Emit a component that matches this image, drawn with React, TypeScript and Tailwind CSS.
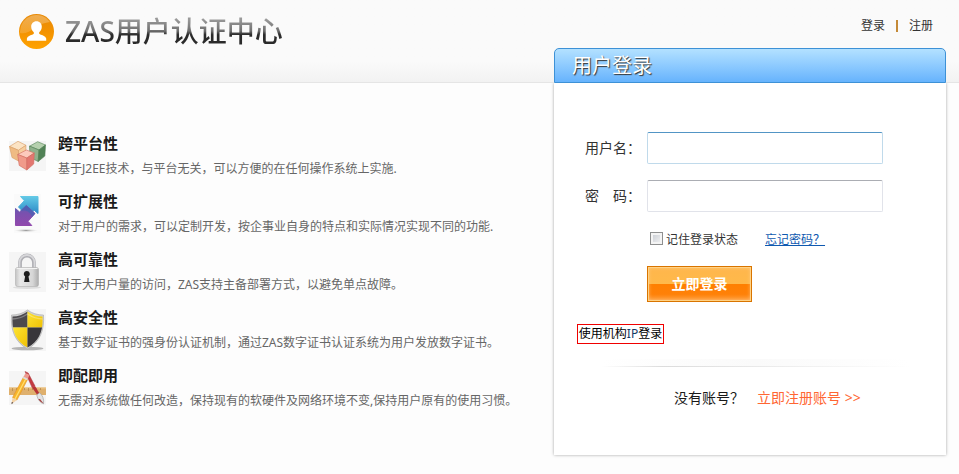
import type { ReactNode } from "react";

type Feature = {
  title: string;
  text: string;
  icon: ReactNode;
};

function LogoIcon() {
  return (
    <svg width="35" height="35" viewBox="0 0 35 35" aria-hidden="true">
      <defs>
        <linearGradient id="logo-base" x1="0" y1="0" x2="0" y2="1">
          <stop offset="0" stopColor="#e88a08" />
          <stop offset="0.5" stopColor="#f39200" />
          <stop offset="1" stopColor="#ffa300" />
        </linearGradient>
        <linearGradient id="logo-gloss" x1="0" y1="0" x2="0" y2="1">
          <stop offset="0" stopColor="#fff" stopOpacity="0.3" />
          <stop offset="1" stopColor="#fff" stopOpacity="0.15" />
        </linearGradient>
      </defs>
      <circle cx="17.5" cy="17.5" r="17.5" fill="url(#logo-base)" />
      <path d="M1 17.5A16.5 16.5 0 0 1 31 8C24 9 20 11 15 14.500C10 18 6 20 1 19Z" fill="url(#logo-gloss)" />
      <path
        d="M17.500 7.200c3.200 0 5.300 2.400 5.300 5.500 0 2.500-1.200 4.300-2.600 5.500v1.500c1.500 1.300 6.600 2 7 4.900v2.100H7.900v-2.100c.4-2.900 5.500-3.600 6.900-4.900v-1.500c-1.400-1.200-2.600-3-2.600-5.500 0-3.100 2.100-5.500 5.300-5.500z"
        fill="#fff"
      />
    </svg>
  );
}

function CubesIcon() {
  return (
    <svg width="37" height="44" viewBox="0 0 37 44" className="shrink-0" aria-hidden="true">
      <rect y="8" width="37" height="30" fill="#f5f5f5" />
      <g strokeWidth="0.6" strokeLinejoin="round">
        <g stroke="#d79a63">
          <path d="M.5 13.500L9 8.300l8 4-7.500 5z" fill="#fbe3c4" />
          <path d="M.5 13.500l9 3.800V28L3 24.500z" fill="#efbb83" />
          <path d="M9.500 17.300l7.500-5-.5 10.500-7 5.200z" fill="#f6cfa0" />
        </g>
        <g stroke="#4d7d50">
          <path d="M20.500 13.200l8.200-4.500 7.800 3.300-6.500 5z" fill="#b5d0ae" />
          <path d="M20.500 13.200L30 17l-.8 11.500-8.200-4z" fill="#8fb18c" />
          <path d="M30 17l6.500-5-.7 11-6.600 5.500z" fill="#518256" />
        </g>
        <g stroke="#d06a5e">
          <path d="M8.700 21.500l8.600-4.500 8 3-7.500 5z" fill="#fccabd" />
          <path d="M8.700 21.500l9.100 3.500v12l-7.600-4.600z" fill="#f09a8a" />
          <path d="M17.800 25l7.500-5-.6 11-6.900 6z" fill="#e27770" />
        </g>
      </g>
    </svg>
  );
}

function ArrowsIcon() {
  return (
    <svg width="37" height="44" viewBox="0 0 37 44" className="shrink-0" aria-hidden="true">
      <defs>
        <linearGradient id="arrow-blue" x1="0" y1="0" x2="0" y2="1">
          <stop offset="0" stopColor="#63c9e6" />
          <stop offset="1" stopColor="#2380c2" />
        </linearGradient>
        <linearGradient id="arrow-purple" x1="0" y1="0" x2="0" y2="1">
          <stop offset="0" stopColor="#5c60b4" />
          <stop offset="0.4" stopColor="#7a50ae" />
          <stop offset="1" stopColor="#9149ad" />
        </linearGradient>
        <radialGradient id="arrow-shadow">
          <stop offset="0" stopColor="#999" />
          <stop offset="1" stopColor="#ddd" stopOpacity="0" />
        </radialGradient>
      </defs>
      <rect x="5" y="3" width="27" height="39" fill="#fafafa" />
      <ellipse cx="17" cy="39.500" rx="12" ry="1.700" fill="url(#arrow-shadow)" />
      <g strokeLinejoin="round">
        <path
          d="M11.500 5.500H29V22.500l-3.800-3.300-6.200 6.300-9.500-9.500 5.800-6.300z"
          fill="url(#arrow-blue)"
          stroke="url(#arrow-blue)"
        />
        <path
          d="M6.500 17.500l4 3.500 6.800-6.500 8.700 8-7 7.800 3.800 4.200H6.500z"
          fill="url(#arrow-purple)"
          stroke="url(#arrow-purple)"
        />
      </g>
      <path d="M11.500 20l5.800-5.500 8.700 8-3 3.500c-2-6-7-7.500-11.500-6z" fill="#4463b2" fillOpacity="0.7" />
    </svg>
  );
}

function LockIcon() {
  return (
    <svg width="37" height="44" viewBox="0 0 37 44" className="shrink-0" aria-hidden="true">
      <defs>
        <linearGradient id="lock-body" x1="0" y1="0" x2="1" y2="0">
          <stop offset="0" stopColor="#c4c4c4" />
          <stop offset="0.2" stopColor="#e8e8e8" />
          <stop offset="0.75" stopColor="#d6d6d6" />
          <stop offset="1" stopColor="#adadad" />
        </linearGradient>
      </defs>
      <rect y="3" width="37" height="40" fill="#f5f5f5" />
      <ellipse cx="18" cy="38.500" rx="14" ry="1.500" fill="#ddd" />
      <path d="M11 19V13.500a7 7 0 0 1 14 0V19" fill="none" stroke="#aeaeb3" strokeWidth="3.800" />
      <path d="M10.500 19V13.500a7.500 7.500 0 0 1 15 0V19" fill="none" stroke="#d7d7da" strokeWidth="1.800" />
      <rect x="6.500" y="18.500" width="23" height="19" rx="2" fill="url(#lock-body)" stroke="#b0b0b0" strokeWidth="0.600" />
      <path d="M7.500 19.500h21" stroke="#f3f3f3" />
      <path d="M17.800 22a3 3 0 0 1 1.700 5.500l1 5.500h-5.400l1-5.500a3 3 0 0 1 1.700-5.500z" fill="#1c1c1c" />
    </svg>
  );
}

function ShieldIcon() {
  return (
    <svg width="37" height="44" viewBox="0 0 37 44" className="shrink-0" aria-hidden="true">
      <defs>
        <clipPath id="shield-clip">
          <path d="M18.500 4.500c4 3 9.500 5 15 5 .8 14-3 24.500-15 31C6.500 34 2.700 23.500 3.500 9.500c5.500 0 11-2 15-5z" />
        </clipPath>
        <linearGradient id="shield-yellow" x1="0" y1="0" x2="1" y2="1">
          <stop offset="0" stopColor="#ffe838" />
          <stop offset="1" stopColor="#eebd00" />
        </linearGradient>
      </defs>
      <rect y="2" width="37" height="42" fill="#f5f5f5" />
      <ellipse cx="18.500" cy="41.500" rx="16" ry="1.800" fill="#b5b5b5" />
      <path
        d="M18.500 3c4.500 3.300 10 5 16 5 1 15.500-3.500 27-16 34C6 35 1.500 23.500 2.500 8c6 0 11.500-1.700 16-5z"
        fill="#d0d0d0"
        stroke="#aaa"
        strokeWidth="0.600"
      />
      <g clipPath="url(#shield-clip)">
        <rect width="18.500" height="20.500" fill="#4c4a4d" />
        <rect x="18.500" width="19" height="20.500" fill="url(#shield-yellow)" />
        <rect y="20.500" width="18.500" height="24" fill="url(#shield-yellow)" />
        <rect x="18.500" y="20.500" width="19" height="24" fill="#38363a" />
        <path d="M3 12c6 0 11-2 15.500-5C23 10 28 12 34 12" fill="none" stroke="#fff" strokeOpacity="0.3" strokeWidth="1.500" />
      </g>
    </svg>
  );
}

function ToolsIcon() {
  return (
    <svg width="37" height="44" viewBox="0 0 37 44" className="shrink-0" aria-hidden="true">
      <rect y="6" width="37" height="34" fill="#f5f5f5" />
      <rect y="22.500" width="37" height="7.500" fill="#dfb06d" />
      <path d="M0 23h37" stroke="#f0ca8c" />
      <path d="M3.500 23v3M7.500 23v2M11.500 23v3M15.500 23v2M19.500 23v3M23.500 23v2M27.500 23v3M31.500 23v2" stroke="#b08245" strokeWidth="0.700" />
      <g strokeLinejoin="round">
        <path d="M16 6.500l3.200 1.500L26 21l-2.800 1.800z" fill="#c43b42" stroke="#a9383d" strokeWidth="0.500" />
        <path d="M23.200 22.800L26 21l4.500 7.500-2 1.700z" fill="#b73336" />
        <path d="M27.800 29.800l2.800-2c3 2.500 4.500 6 4 11-3.500-1-6-4.500-6.800-9z" fill="#e3e3e3" stroke="#999" strokeWidth="0.600" />
        <path d="M31 34l3.600 4.500c-2-.5-4.300-2.500-5.300-4.500z" fill="#a74543" />
        <path d="M14.500 12l4.300 2L8 35l-4.500-2.500z" fill="#f7b42c" stroke="#dd8b22" strokeWidth="0.500" />
        <path d="M17 13.500L6 34" stroke="#ffe071" strokeWidth="1.200" />
        <path d="M14.500 12l1.500-3c1.500-1.500 4 0 4.200 1.500L18.800 14z" fill="#ec9a90" />
        <path d="M13.800 13.200l4.400 2.100.7-1.500-4.300-2z" fill="#ddd" />
        <path d="M3.500 32.500L8 35l-5.500 4z" fill="#f4d3a5" />
        <path d="M2.800 37l1.500.8-1.800 1.400z" fill="#433" />
      </g>
    </svg>
  );
}

const features: Feature[] = [
  {
    title: "跨平台性",
    text: "基于J2EE技术，与平台无关，可以方便的在任何操作系统上实施.",
    icon: <CubesIcon />,
  },
  {
    title: "可扩展性",
    text: "对于用户的需求，可以定制开发，按企事业自身的特点和实际情况实现不同的功能.",
    icon: <ArrowsIcon />,
  },
  {
    title: "高可靠性",
    text: "对于大用户量的访问，ZAS支持主备部署方式，以避免单点故障。",
    icon: <LockIcon />,
  },
  {
    title: "高安全性",
    text: "基于数字证书的强身份认证机制，通过ZAS数字证书认证系统为用户发放数字证书。",
    icon: <ShieldIcon />,
  },
  {
    title: "即配即用",
    text: "无需对系统做任何改造，保持现有的软硬件及网络环境不变,保持用户原有的使用习惯。",
    icon: <ToolsIcon />,
  },
];

function Header() {
  return (
    <header className="flex h-[83px] items-start justify-between border-b border-[#e5e5e5] bg-linear-to-b from-[#fafafa] from-75% to-[#f2f2f2] pr-[26px] pl-[19px]">
      <div className="flex items-center gap-[11px] pt-3">
        <LogoIcon />
        <h1 className="bg-linear-to-b from-[#999] from-20% via-[#6f6f6f] via-50% to-[#2a2a2a] to-60% bg-clip-text text-[28px] leading-[38px] font-medium text-transparent">
          ZAS用户认证中心
        </h1>
      </div>
      <nav className="flex items-center pt-4 text-xs leading-5 text-[#333]">
        <a href="#login">登录</a>
        <span className="mx-[11px] h-3 w-0.5 bg-[#c48a38]" />
        <a href="#register">注册</a>
      </nav>
    </header>
  );
}

function FeatureList() {
  return (
    <ul className="flex flex-col gap-[13px] pt-[85px]">
      {features.map((feature) => (
        <li key={feature.title} className="flex h-[45px] gap-3">
          {feature.icon}
          <div>
            <h2 className="text-[15px] leading-5 font-bold text-[#1a1a1a]">{feature.title}</h2>
            <p className="mt-1.5 text-xs leading-5 whitespace-nowrap text-[#666]">{feature.text}</p>
          </div>
        </li>
      ))}
    </ul>
  );
}

function LoginCard() {
  return (
    <section id="login" className="w-[392px] shrink-0">
      <h2 className="h-[35px] rounded-t-[5px] border border-[#3d91d6] bg-linear-to-b from-[#b3e1ff] to-[#66b3fd] pl-[17px] text-xl leading-[34px] text-white text-shadow-[1px_1px_1px_#333]">
        用户登录
      </h2>
      <form
        className="bg-white pt-[49px] pb-[47px] pl-[23px] shadow-[0_0_3px_rgba(0,0,0,0.35)] [clip-path:inset(0_-6px_-6px_-6px)]"
        onSubmit={(e) => e.preventDefault()}
      >
        <div className="flex items-center">
          <label htmlFor="username" className="w-[70px] pl-2 text-sm whitespace-nowrap text-[#333]">
            用户名：
          </label>
          <input
            id="username"
            type="text"
            className="h-8 w-[236px] rounded-xs border border-[#c0daeb] border-t-[#5295c5] bg-white px-2 text-sm outline-none"
          />
        </div>
        <div className="mt-4 flex items-center">
          <label htmlFor="password" className="w-[70px] pl-2 text-sm whitespace-nowrap text-[#333]">
            密　码：
          </label>
          <input
            id="password"
            type="password"
            className="h-8 w-[236px] rounded-xs border border-[#e1e3ea] border-t-[#abadb3] bg-white px-2 text-sm outline-none"
          />
        </div>
        <div className="mt-[18px] flex h-5 items-center pl-[73px] text-xs">
          <input
            id="remember"
            type="checkbox"
            className="mb-1 size-[13px] appearance-none border border-[#8e8f8f] bg-linear-to-br from-[#c5c9d0] to-[#f6f6f6] shadow-[inset_0_0_0_2px_#f4f4f4] checked:bg-[#4b7ea8]"
          />
          <label htmlFor="remember" className="ml-[3px] text-[#333]">
            记住登录状态
          </label>
          <a href="#forgot" className="ml-[27px] text-[#0f59b0] underline">
            忘记密码？
          </a>
        </div>
        <button
          type="submit"
          className="mt-4 ml-[70px] block h-9 w-[105px] border border-[#d97400] bg-[linear-gradient(#ffb64c,#ffb94a_50%,#ff7f00_50%,#ff8108_80%,#ffa040)] text-sm font-bold text-white shadow-[inset_0_0_0_1px_#ffd285,inset_0_0_4px_#ffcf90]"
        >
          立即登录
        </button>
        <button
          type="button"
          className="mt-[22px] block h-5 w-[87px] border border-[#f00000] bg-white text-xs leading-[18px] whitespace-nowrap text-black"
        >
          使用机构<span className="text-[#123a66]">IP</span>登录
        </button>
        <div className="mt-[15px] mr-9 ml-6 h-2 bg-linear-to-r from-white via-[#dcdcdc] via-20% to-white pb-px">
          <div className="h-full bg-linear-to-r from-white via-[#fafafa] to-white" />
        </div>
        <p className="mt-[21px] flex gap-[13px] pl-[97px] text-sm leading-5 text-[#1a1a1a]">
          <span>没有账号？</span>
          <a href="#register" className="text-[#ff6633]">
            立即注册账号 &gt;&gt;
          </a>
        </p>
      </form>
    </section>
  );
}

export default function App() {
  return (
    <div className="min-h-screen bg-[#fdfdfd] font-['Noto_Sans','Noto_Sans_CJK_SC',sans-serif]">
      <Header />
      <main className="relative -mt-[35px] flex items-start justify-between pr-[13px] pb-[18px] pl-[9px]">
        <FeatureList />
        <LoginCard />
      </main>
    </div>
  );
}
